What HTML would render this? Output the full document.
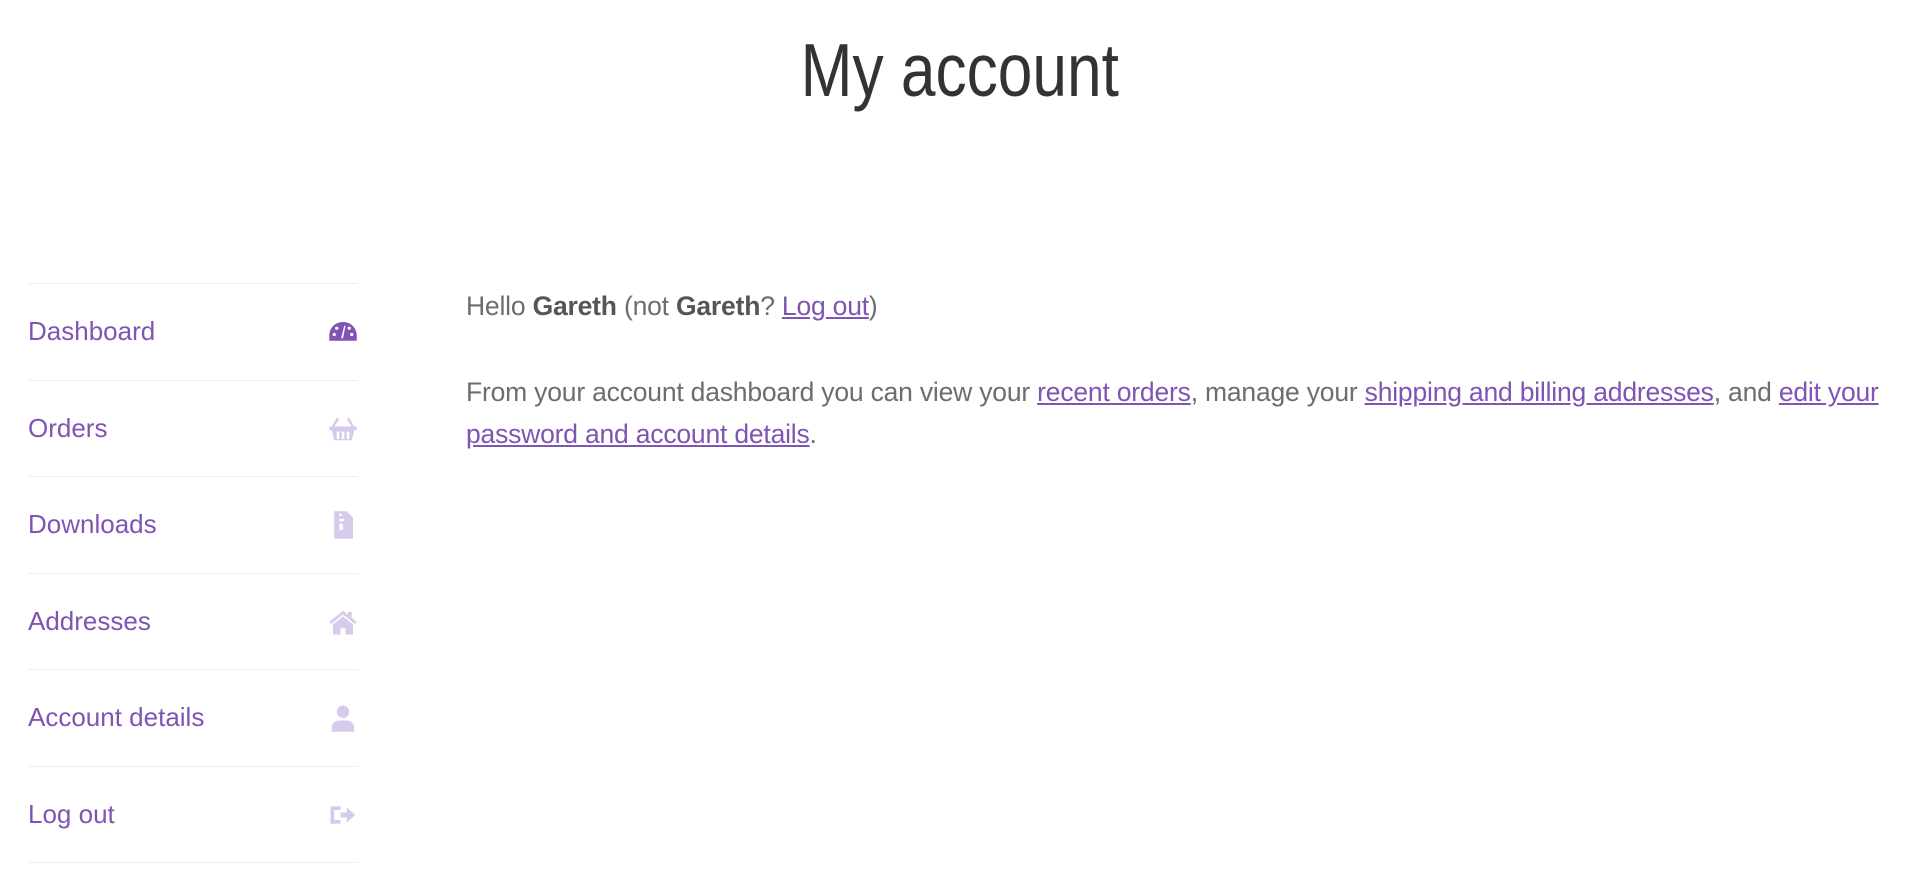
<!DOCTYPE html>
<html><head><meta charset="utf-8"><style>
body{margin:0;background:#fff;width:1920px;height:881px;overflow:hidden;font-family:"Liberation Sans",sans-serif;position:relative}
h1{position:absolute;top:20px;left:0;width:1920px;text-align:center;margin:0;font-weight:normal;color:#333;font-size:75px;line-height:100px}
h1 span{display:inline-block;transform:scaleX(.83)}
.nav{position:absolute;left:28px;top:283px;width:330px;border-top:1px solid #eee}
.nav div{height:95.5px;border-bottom:1px solid #eee;position:relative;color:#7f54b3;font-size:26px;line-height:95px}
.nav svg{position:absolute;right:0;top:33px;width:30px;height:30px;fill:#d6cbea}
.c{position:absolute;left:466px;top:285px;color:#6d6d6d;font-size:26.5px;line-height:42px;letter-spacing:-.2px}
.c p{margin:0 0 44px;white-space:nowrap}
a{color:#7f54b3}
b{color:#555}
</style></head><body>
<h1><span>My account</span></h1>
<div class="nav">
<div>Dashboard<svg viewBox="0 0 24 24" style="fill:#7f54b3"><path d="M12 4C5.5 4 1 9 1 15v4h22v-4C23 9 18.5 4 12 4z"/><circle cx="5" cy="14" r="1.3" fill="#fff"/><circle cx="7" cy="9" r="1.3" fill="#fff"/><circle cx="17" cy="9" r="1.3" fill="#fff"/><circle cx="19" cy="14" r="1.3" fill="#fff"/><path d="M14 7l-2 10h-1.5L13 7z" fill="#fff"/></svg></div>
<div>Orders<svg viewBox="0 0 24 24"><path d="M7 3l-4 7h2l4-6zM17 3l4 7h-2l-4-6zM1 10h22v3H1zM3 13h18l-2 8H5zM7 14v6h2v-6zm4 0v6h2v-6zm4 0v6h2v-6z" fill-rule="evenodd"/></svg></div>
<div>Downloads<svg viewBox="0 0 24 24"><path d="M5 1h10l5 5v17H5zM9 3v2h2V3zm2 2v2h-2v2h2v2H9v5h3v-5h-1V9h2V7h-2V5z"/></svg></div>
<div>Addresses<svg viewBox="0 0 24 24"><path d="M12 3L1 12l1.5 1.5L12 6l9.5 7.5L23 12l-4-3.3V4h-3v2.3zM4 14l8-6.5 8 6.5v8h-6v-5h-4v5H4z"/></svg></div>
<div>Account details<svg viewBox="0 0 24 24"><circle cx="12" cy="7" r="5"/><path d="M3 23v-3c0-4 3-6 6-6h6c3 0 6 2 6 6v3z"/></svg></div>
<div>Log out<svg viewBox="0 0 24 24"><path d="M2 5h8v3H5v8h5v3H2zM10 10h5V6l7 6-7 6v-4h-5z"/></svg></div>
</div>
<div class="c">
<p>Hello <b>Gareth</b> (not <b>Gareth</b>? <a href="#">Log out</a>)</p>
<p>From your account dashboard you can view your <a href="#">recent orders</a>, manage your <a href="#">shipping and billing addresses</a>, and <a href="#">edit your</a><br><a href="#">password and account details</a>.</p>
</div>
</body></html>
